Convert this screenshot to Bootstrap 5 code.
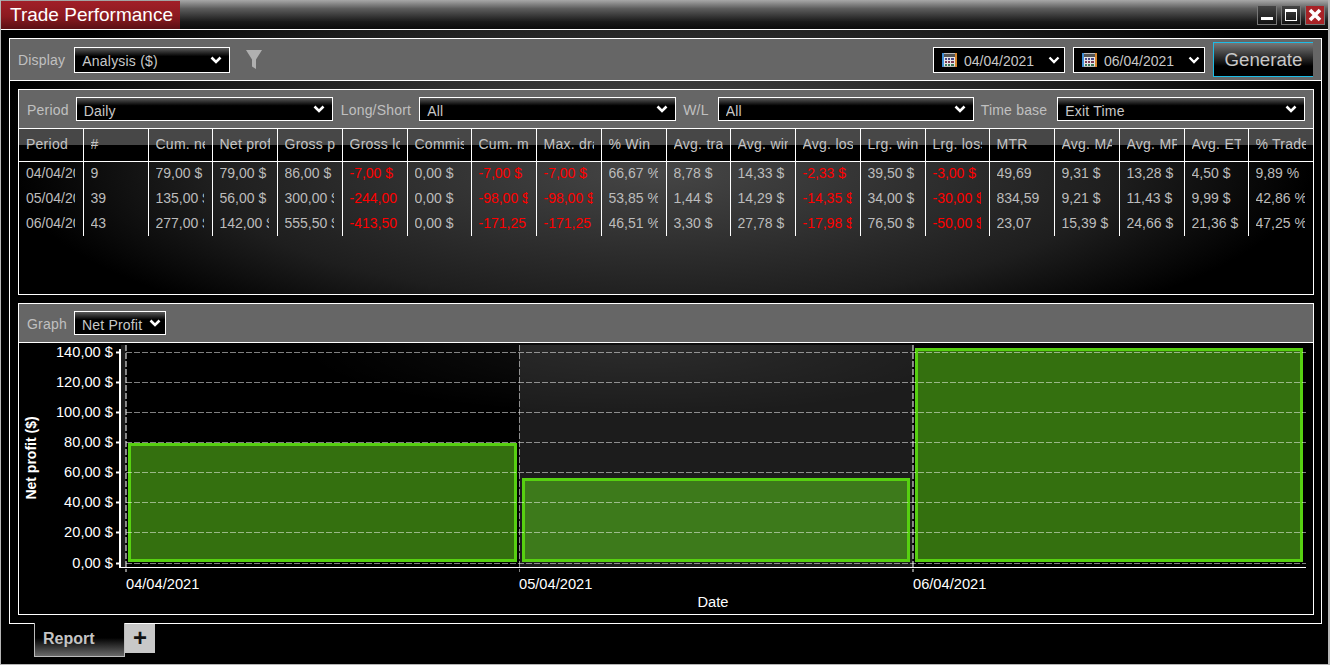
<!DOCTYPE html>
<html lang="en">
<head>
    <meta charset="UTF-8">
    <meta name="viewport" content="width=device-width, initial-scale=1.0">
    <title>Trade Performance</title>
    <link href="https://cdn.jsdelivr.net/npm/bootstrap@5.3.0/dist/css/bootstrap.min.css" rel="stylesheet">
    <style>
        html, body { height: 100%; background: #000; overflow: hidden; }
        body { font-family: "Liberation Sans", Arial, sans-serif; font-size: 14px; color: #bbb; }

        .win-frame { width: 1330px; height: 665px; border: 1px solid #b5b5b5; border-width: 0 2px 2px 1px; background: #000; }
        .win-title { height: 30px; border-bottom: 1px solid #fff; background: linear-gradient(#a8a8a8, #5c5c5c 30%, #1a1a1a 75%, #0c0c0c); }
        .win-name { width: 179px; height: 28px; margin-top: 1px; padding-left: 9px; font-size: 19px; line-height: 28px; color: #fff; background: linear-gradient(#a11f28, #8c1a20 55%, #5a1015); }
        .win-btn { width: 20px; height: 20px; border: 1px solid #777; background: linear-gradient(#444, #111); }
        .win-btn-close { background: #a82226; }
        .win-btns { margin: 5px 3px 0 0; }

        .win-body { height: 634px; padding: 8px 6px 0 8px; background: radial-gradient(ellipse 660px 175px at 660px 90px, #464646, #1a1a1a 70%, #000); }
        .main-panel { height: 586px; border: 1px solid #fff; padding-bottom: 8px; }
        .tool-strip { background: #666; border-bottom: 1px solid #fff; padding: 0 8px; color: #c0c0c0; }
        .tool-top { height: 42px; }
        .tool-inner { height: 39px; }
        .strip-label { white-space: nowrap; letter-spacing: .2px; margin-top: 2px; margin-right: 7px; }
        .tool-top .strip-label { margin-right: 9px; }
        .label-long { margin-left: 8px; margin-right: 8px; }
        .label-wl { margin-left: 7px; margin-right: 9px; }
        .label-base { margin-left: 7px; margin-right: 10px; }

        .dark-select.form-select, .date-pick {
            height: 26px; padding: 2px 26px 0 7px; border: 1px solid #fff; border-radius: 0;
            font-size: 14px; line-height: 22px; color: #c8c8c8; box-shadow: none;
            background-color: #000;
            background-image:
                url("data:image/svg+xml,%3Csvg xmlns='http://www.w3.org/2000/svg' viewBox='0 0 12 8'%3E%3Cpath d='M1.5 1.5 6 6l4.5-4.5' fill='none' stroke='%23fff' stroke-width='2.6'/%3E%3C/svg%3E"),
                linear-gradient(#5a5a5a, #000 35%);
            background-repeat: no-repeat;
            background-position: right 7px center, 0 0;
            background-size: 12px 8px, 100% 100%;
        }
        .dark-select.form-select { letter-spacing: .2px; }
        .tool-inner .dark-select.form-select { height: 24px; }
        .sel-wide { flex: 0 0 257px; }
        .sel-wl { flex: 0 0 256px; }
        .sel-last { flex: 1 1 0; min-width: 0; }
        .sel-graph.form-select { width: 92px; padding-right: 18px; background-position: right 4px center, 0 0; }
        .sel-display { width: 156px; }
        .date-pick { width: 132px; padding-left: 8px; background-image:
                url("data:image/svg+xml,%3Csvg xmlns='http://www.w3.org/2000/svg' viewBox='0 0 12 8'%3E%3Cpath d='M1.5 1.5 6 6l4.5-4.5' fill='none' stroke='%23fff' stroke-width='2.4'/%3E%3C/svg%3E"),
                none; background-position: right 4px center, 0 0; }
        .cal-icon { margin-right: 7px; margin-top: -2px; }
        .gen-btn { width: 100px; height: 35px; padding: 0; border: 1px solid #1cbce6; border-right: 0; border-radius: 0; font-size: 18.67px; color: #c8c8c8; background: linear-gradient(#777, #222 50%, #000 70%); }

        .sub-panel { border: 1px solid #fff; margin: 8px 7px 0 8px; }
        .grid-panel { height: 206px; background: radial-gradient(ellipse 650px 190px at 642px 80px, #464646, #1e1e1e 70%, #000); }
        .chart-panel { height: 312px; background: #000; }

        .data-grid { table-layout: fixed; width: 1294px; border-collapse: collapse; margin: 0; }
        .data-grid th, .data-grid td { padding: 0; border-right: 1px solid #fff; font-weight: 400; overflow: hidden; white-space: nowrap; }
        .data-grid th:last-child, .data-grid td:last-child { border-right: 0; }
        .data-grid th div { overflow: hidden; margin: 0 7px 0 7px; letter-spacing: .25px; }
        .data-grid td div { overflow: hidden; margin: 0 8px 0 7px; }
        .data-grid th { height: 32px; border-bottom: 1px solid #fff; color: #c4c4c4; background: linear-gradient(#474747 50%, #000 50%); }
        .data-grid td { height: 25px; color: #bcbcbc; }
        .data-grid td.neg-val { color: #f00; }

        .tab-strip { padding-left: 25px; }
        .report-tab { width: 91px; height: 34px; margin-top: -1px; padding: 4px 0 0 8px; border: 1px solid #bbb; border-top: 0; font-weight: 700; font-size: 16px; color: #c4c4c4; background: linear-gradient(#000 45%, #6a6a6a); }
        .plus-tab { width: 30px; height: 29px; background: #c8c8c8; color: #111; font-weight: 700; font-size: 24px; line-height: 27px; text-align: center; }

        .plot-text { font-family: "Liberation Sans", Arial, sans-serif; font-size: 14.67px; fill: #fff; }
        .plot-title { font-size: 14px; font-weight: 700; }
    </style>
</head>
<body>
<div class="win-frame">
    <div class="win-title d-flex justify-content-between">
        <div class="win-name">Trade Performance</div>
        <div class="win-btns d-flex gap-1">
            <div class="win-btn d-flex align-items-center justify-content-center">
                <svg width="12" height="12" viewBox="0 0 12 12"><rect x="0" y="8" width="12" height="3" fill="#fff"/></svg>
            </div>
            <div class="win-btn d-flex align-items-center justify-content-center">
                <svg width="12" height="12" viewBox="0 0 12 12"><rect x="0.5" y="0.5" width="11" height="11" fill="none" stroke="#fff"/><rect x="0" y="0" width="12" height="3" fill="#fff"/></svg>
            </div>
            <div class="win-btn win-btn-close d-flex align-items-center justify-content-center">
                <svg width="14" height="14" viewBox="0 0 14 14"><path d="M2 2l10 10M12 2L2 12" stroke="#fff" stroke-width="3.6"/></svg>
            </div>
        </div>
    </div>

    <div class="win-body">
        <div class="main-panel">
            <div class="tool-strip tool-top d-flex align-items-center">
                <span class="strip-label">Display</span>
                <select class="form-select dark-select sel-display"><option>Analysis ($)</option></select>
                <svg class="ms-3" width="16" height="19" viewBox="0 0 16 19"><path d="M0 0h16l-6 9.5V19l-4-2.5V9.5z" fill="#b0b0b0"/></svg>
                <div class="ms-auto d-flex align-items-center gap-2">
                    <div class="date-pick d-flex align-items-center">
                        <svg class="cal-icon" width="15" height="14" viewBox="0 0 15 14"><use href="#cal-glyph"/></svg>
                        <span>04/04/2021</span>
                    </div>
                    <div class="date-pick d-flex align-items-center">
                        <svg class="cal-icon" width="15" height="14" viewBox="0 0 15 14"><use href="#cal-glyph"/></svg>
                        <span>06/04/2021</span>
                    </div>
                    <button class="btn gen-btn" type="button">Generate</button>
                </div>
            </div>

            <div class="sub-panel grid-panel">
                <div class="tool-strip tool-inner d-flex align-items-center">
                    <span class="strip-label">Period</span>
                    <select class="form-select dark-select sel-wide"><option>Daily</option></select>
                    <span class="strip-label label-long">Long/Short</span>
                    <select class="form-select dark-select sel-wide"><option>All</option></select>
                    <span class="strip-label label-wl">W/L</span>
                    <select class="form-select dark-select sel-wl"><option>All</option></select>
                    <span class="strip-label label-base">Time base</span>
                    <select class="form-select dark-select sel-last"><option>Exit Time</option></select>
                </div>
                <table class="data-grid" id="stats-grid"><colgroup id="stats-cols"></colgroup><thead><tr id="stats-head"></tr></thead><tbody id="stats-body"></tbody></table>
            </div>

            <div class="sub-panel chart-panel">
                <div class="tool-strip tool-inner d-flex align-items-center">
                    <span class="strip-label">Graph</span>
                    <select class="form-select dark-select sel-graph"><option>Net Profit</option></select>
                </div>
                <svg id="plot" width="1294" height="271" viewBox="19 343 1294 271" class="d-block"></svg>
            </div>
        </div>

        <div class="tab-strip d-flex align-items-start">
            <div class="report-tab">Report</div>
            <div class="plus-tab">+</div>
        </div>
    </div>
</div>

<svg width="0" height="0" class="position-absolute">
    <defs>
        <g id="cal-glyph">
            <rect width="15" height="14" fill="#222"/>
            <rect width="2" height="14" fill="#3f8fd8"/>
            <rect x="13" width="2" height="14" fill="#d8862c"/>
            <rect x="2" y="0" width="11" height="1" fill="#bbb"/>
            <rect x="2" y="1" width="11" height="3" fill="#555"/>
            <rect x="2" y="4" width="11" height="9" fill="#e6e6e6"/>
            <path d="M3 5h2v2H3zM6 5h2v2H6zM9 5h3v2H9z" fill="#4a4a88"/>
            <path d="M3 8h2v2H3zM6 8h2v2H6zM9 8h3v2H9z" fill="#7a3a55"/>
            <path d="M3 11h2v2H3zM6 11h2v2H6zM9 11h3v2H9z" fill="#3a7a5a"/>
            <rect x="2" y="13" width="11" height="1" fill="#bbb"/>
        </g>
    </defs>
</svg>

<script src="https://cdn.jsdelivr.net/npm/bootstrap@5.3.0/dist/js/bootstrap.bundle.min.js"></script>
<script>
    const headers = ['Period', '#', 'Cum. net profit', 'Net profit', 'Gross profit', 'Gross loss', 'Commission', 'Cum. max', 'Max. drawdown', '% Win', 'Avg. trade', 'Avg. win', 'Avg. loss', 'Lrg. win', 'Lrg. loss', 'MTR', 'Avg. MAE', 'Avg. MFE', 'Avg. ETD', '% Trades'];
    const colWidths = [64, 65, 64, 65, 65, 65, 64, 65, 65, 65, 64, 65, 65, 65, 64, 65, 65, 65, 64, 65];
    const rows = [
        ['04/04/2021', '9', '79,00 $', '79,00 $', '86,00 $', '-7,00 $', '0,00 $', '-7,00 $', '-7,00 $', '66,67 %', '8,78 $', '14,33 $', '-2,33 $', '39,50 $', '-3,00 $', '49,69', '9,31 $', '13,28 $', '4,50 $', '9,89 %'],
        ['05/04/2021', '39', '135,00 $', '56,00 $', '300,00 $', '-244,00 $', '0,00 $', '-98,00 $', '-98,00 $', '53,85 %', '1,44 $', '14,29 $', '-14,35 $', '34,00 $', '-30,00 $', '834,59', '9,21 $', '11,43 $', '9,99 $', '42,86 %'],
        ['06/04/2021', '43', '277,00 $', '142,00 $', '555,50 $', '-413,50 $', '0,00 $', '-171,25 $', '-171,25 $', '46,51 %', '3,30 $', '27,78 $', '-17,98 $', '76,50 $', '-50,00 $', '23,07', '15,39 $', '24,66 $', '21,36 $', '47,25 %']
    ];

    document.getElementById('stats-cols').innerHTML = colWidths.map(w => `<col style="width:${w}px">`).join('');
    document.getElementById('stats-head').innerHTML = headers.map(h => `<th><div>${h}</div></th>`).join('');
    document.getElementById('stats-body').innerHTML = rows.map(row => `
        <tr>${row.map(v => `<td class="${v.startsWith('-') ? 'neg-val' : ''}"><div>${v}</div></td>`).join('')}</tr>
    `).join('');

    // chart, drawn in page coordinates through the viewBox
    const bands = [[121, 126, '#1c1c1c'], [126, 519, '#000'], [519, 913, '#1c1c1c'], [913, 1306, '#000']];
    const bars = [[129.5, 444.5, 386, 116, '#34700f'], [523.5, 479.5, 385, 81, '#3d7a1b'], [916.5, 349.5, 385, 211, '#34700f']];
    const labels = ['140,00 $', '120,00 $', '100,00 $', '80,00 $', '60,00 $', '40,00 $', '20,00 $', '0,00 $'];
    const gridYs = [352, 382, 412, 442, 472, 502, 532, 563];
    let svg = '<defs><radialGradient id="plot-glow"><stop offset="0" stop-color="#fff" stop-opacity=".07"/><stop offset="1" stop-color="#fff" stop-opacity="0"/></radialGradient></defs>';
    bands.forEach(b => { svg += `<rect x="${b[0]}" y="345" width="${b[1] - b[0]}" height="222" fill="${b[2]}"/>`; });
    svg += '<ellipse cx="640" cy="345" rx="340" ry="70" fill="url(#plot-glow)"/>';
    bars.forEach(b => { svg += `<rect x="${b[0]}" y="${b[1]}" width="${b[2]}" height="${b[3]}" fill="${b[4]}" stroke="#57d011" stroke-width="3"/>`; });
    labels.forEach((t, i) => {
        const y = gridYs[i] + 0.5;
        svg += `<text class="plot-text" x="113" y="${y + 4.5}" text-anchor="end">${t}</text>`;
        svg += `<path d="M116 ${y}h4" stroke="#fff" stroke-width="2"/>`;
        svg += `<path d="M126 ${y}H1306" stroke="#fff" stroke-opacity=".5" stroke-dasharray="6 2"/>`;
    });
    [[126, 2], [519.5, 1], [913, 2]].forEach((v, i) => {
        svg += `<path d="M${v[0]} 345V572" stroke="#fff" stroke-opacity=".5" stroke-width="${v[1]}" stroke-dasharray="6 2"/>`;
        svg += `<text class="plot-text" x="${Math.floor(v[0])}" y="589">${['04/04/2021', '05/04/2021', '06/04/2021'][i]}</text>`;
    });
    svg += '<path d="M120 349V568" stroke="#fff" stroke-width="2"/><path d="M120 567.5H1306" stroke="#fff"/>';
    svg += '<text class="plot-text" x="713" y="607" text-anchor="middle">Date</text>';
    svg += '<text class="plot-text plot-title" transform="translate(36 458) rotate(-90)" text-anchor="middle">Net profit ($)</text>';
    document.getElementById('plot').innerHTML = svg;
</script>
</body>
</html>
